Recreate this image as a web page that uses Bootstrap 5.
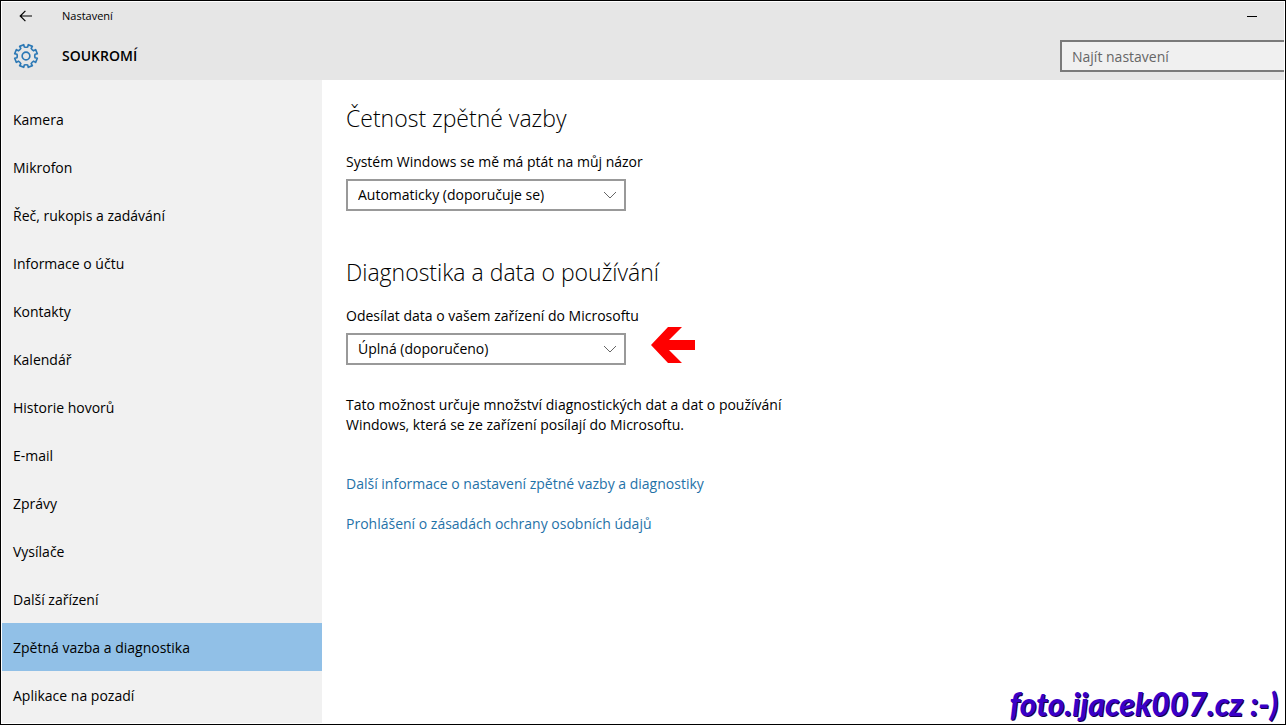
<!DOCTYPE html>
<html lang="cs">
<head>
<meta charset="utf-8">
<meta name="viewport" content="width=device-width, initial-scale=1">
<title>Nastavení</title>
<link href="https://cdn.jsdelivr.net/npm/bootstrap@5.3.0/dist/css/bootstrap.min.css" rel="stylesheet">
<style>
  body { font-family: "Open Sans", "Noto Sans", sans-serif; font-size: 14px; line-height: 20px; color: #000; background: #fff; }
  .app-window { border: 1px solid #000; padding: 1px; }
  .app-header { background: #e6e6e6; }
  .title-bar { height: 28px; font-size: 11px; }
  .title-bar .btn { width: 48px; height: 28px; line-height: 0; border-radius: 0; }
  .heading-bar { height: 50px; padding-top: 2px; }
  .icon-cell { width: 48px; }
  .section-name { font-size: 14px; line-height: 20px; font-weight: 600; color: #000; }
  .search-box { width: 224px; height: 32px; padding: 0 10px; font-size: 14px; background: #f0f0f0; border: 2px solid #7a7a7a; border-right: 0; border-radius: 0; }
  .search-box::placeholder { color: #666; }
  .side-menu { width: 320px; background: #f1f1f1; padding-top: 15px; }
  .side-menu .nav-link { height: 48px; padding: 15px 11px 13px; color: #000; }
  .side-menu .nav-link.active { background: #91c0e7; }
  .settings-pane { padding: 22px 24px; }
  .settings-pane h2 { font-size: 23px; line-height: 32px; font-weight: 300; margin-bottom: 18px; }
  .settings-pane label { margin-bottom: 7px; }
  .choice { width: 280px; height: 32px; padding: 0 30px 0 10px; font-size: 14px; line-height: 20px; color: #000; border: 2px solid #999; border-radius: 0;
    background: #fff url("data:image/svg+xml,%3Csvg xmlns='http://www.w3.org/2000/svg' viewBox='0 0 14 8'%3E%3Cpath d='M1 1l6 6 6-6' fill='none' stroke='%23666'/%3E%3C/svg%3E") no-repeat right 7px center / 14px 8px; }
  .choice-group { margin-bottom: 45px; }
  .explanation { max-width: 480px; margin: -15px 0 39px; }
  .pane-link { color: #1f72a8; text-decoration: none; }
  .pointer-arrow { margin: -6px 0 0 25px; }
  .watermark { right: 7px; bottom: 3px; font: italic 900 32px/34px Lato, sans-serif; color: #3a00c8; text-shadow: 1px 1px 0 #140050; }
</style>
</head>
<body>
<div class="app-window d-flex flex-column min-vh-100 position-relative">
  <header class="app-header">
    <div class="title-bar d-flex align-items-center">
      <button type="button" class="btn p-0" aria-label="Zpět">
        <svg width="14" height="12" viewBox="0 0 14 12" fill="none" stroke="#000" stroke-width="1.2"><path d="M13 6H1.2M6.4 .8L1.2 6l5.2 5.2"/></svg>
      </button>
      <span class="ms-2 ps-1">Nastavení</span>
      <button type="button" class="btn p-0 ms-auto me-2" aria-label="Minimalizovat">
        <svg width="10" height="10" viewBox="0 0 10 10"><path d="M0 5h10v1H0z"/></svg>
      </button>
    </div>
    <div class="heading-bar d-flex align-items-center">
      <div class="icon-cell text-center">
        <svg width="26" height="26" viewBox="-13.5 -13.5 27 27" fill="none" stroke="#2b78b5" stroke-width="1.7" stroke-linejoin="round" aria-hidden="true">
          <path d="M9.34 1.73L11.76 2.39 10 6.62 7.83 5.38Q6.2 6.2 5.38 7.83L6.62 10 2.39 11.76 1.73 9.34Q0 8.8-1.73 9.34L-2.39 11.76-6.62 10-5.38 7.83Q-6.2 6.2-7.83 5.38L-10 6.62-11.76 2.39-9.34 1.73Q-8.8 0-9.34-1.73L-11.76-2.39-10-6.62-7.83-5.38Q-6.2-6.2-5.38-7.83L-6.62-10-2.39-11.76-1.73-9.34Q0-8.8 1.73-9.34L2.39-11.76 6.62-10 5.38-7.83Q6.2-6.2 7.83-5.38L10-6.62 11.76-2.39 9.34-1.73Q8.8 0 9.34 1.73Z"/>
          <circle r="4"/>
        </svg>
      </div>
      <h1 class="section-name mb-0 ms-2 ps-1">SOUKROMÍ</h1>
      <input type="search" class="search-box form-control ms-auto" placeholder="Najít nastavení" aria-label="Najít nastavení">
    </div>
  </header>
  <div class="d-flex flex-grow-1">
    <nav class="side-menu nav flex-column flex-nowrap flex-shrink-0">
      <a class="nav-link" href="#">Kamera</a>
      <a class="nav-link" href="#">Mikrofon</a>
      <a class="nav-link" href="#">Řeč, rukopis a zadávání</a>
      <a class="nav-link" href="#">Informace o účtu</a>
      <a class="nav-link" href="#">Kontakty</a>
      <a class="nav-link" href="#">Kalendář</a>
      <a class="nav-link" href="#">Historie hovorů</a>
      <a class="nav-link" href="#">E-mail</a>
      <a class="nav-link" href="#">Zprávy</a>
      <a class="nav-link" href="#">Vysílače</a>
      <a class="nav-link" href="#">Další zařízení</a>
      <a class="nav-link active" href="#" aria-current="page">Zpětná vazba a diagnostika</a>
      <a class="nav-link" href="#">Aplikace na pozadí</a>
    </nav>
    <main class="settings-pane flex-grow-1">
      <section class="choice-group">
        <h2>Četnost zpětné vazby</h2>
        <label class="d-block" for="frequency">Systém Windows se mě má ptát na můj názor</label>
        <select id="frequency" class="choice form-select"><option>Automaticky (doporučuje se)</option></select>
      </section>
      <section>
        <div class="choice-group">
          <h2>Diagnostika a data o používání</h2>
          <label class="d-block" for="diagnostics">Odesílat data o vašem zařízení do Microsoftu</label>
          <div class="d-flex align-items-start">
            <select id="diagnostics" class="choice form-select"><option>Úplná (doporučeno)</option></select>
            <svg class="pointer-arrow" width="44" height="36" viewBox="0 0 44 36" fill="#f00" aria-hidden="true"><path d="M0 18L17 0h14L18 13h26v10H18l13 13H17z"/></svg>
          </div>
        </div>
        <p class="explanation">Tato možnost určuje množství diagnostických dat a dat o používání Windows, která se ze zařízení posílají do Microsoftu.</p>
        <p class="mb-0 pb-1"><a class="pane-link" href="#">Další informace o nastavení zpětné vazby a diagnostiky</a></p>
        <p class="mt-3 mb-0"><a class="pane-link" href="#">Prohlášení o zásadách ochrany osobních údajů</a></p>
      </section>
    </main>
  </div>
  <div class="watermark position-absolute">foto.ijacek007.cz :-)</div>
</div>
<script src="https://cdn.jsdelivr.net/npm/bootstrap@5.3.0/dist/js/bootstrap.bundle.min.js"></script>
</body>
</html>
